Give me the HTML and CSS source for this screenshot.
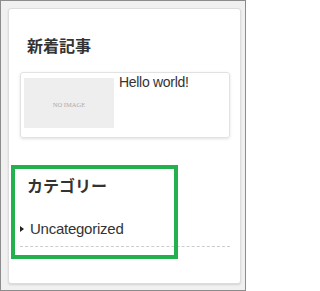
FILE: index.html
```html
<!DOCTYPE html>
<html lang="ja">
<head>
<meta charset="utf-8">
<title>Sidebar</title>
<link rel="stylesheet" href="styles.css">
</head>
<body>
<div class="frame">
  <div class="card">
    <h2 class="widget-title">新着記事</h2>
    <a class="post" href="#">
      <div class="thumb"><span class="noimage">NO IMAGE</span></div>
      <div class="post-title">Hello world!</div>
    </a>
    <h2 class="widget-title cat-title">カテゴリー</h2>
    <ul class="cat-list">
      <li class="cat-item"><span class="arrow"></span><span class="cat-name">Uncategorized</span></li>
    </ul>
  </div>
  <div class="highlight"></div>
</div>
</body>
</html>
```

FILE: styles.css
```css
html, body {
  margin: 0;
  padding: 0;
}
body {
  font-family: "Liberation Sans", Arial, "Noto Sans CJK JP", sans-serif;
  color: #333;
}
.frame {
  position: relative;
  width: 246px;
  height: 291px;
  box-sizing: border-box;
  border: 1px solid #8c8c8c;
  background: #f0f0f0;
  padding: 7px 4px 6px 7px;
  display: flex;
}
.card {
  flex: 1;
  background: #fff;
  border: 1px solid #dcdcdc;
  border-radius: 3px;
  box-shadow: 0 1px 2px rgba(0, 0, 0, 0.12);
  padding: 24px 10px 0 11px;
  display: flex;
  flex-direction: column;
}
.widget-title {
  margin: 0;
  padding-left: 7px;
  font-family: "Noto Sans CJK JP", sans-serif;
  font-size: 16px;
  font-weight: bold;
  line-height: 24px;
  color: #333;
}
.post {
  margin-top: 15px;
  display: flex;
  align-items: flex-start;
  border: 1px solid #e2e2e2;
  border-radius: 3px;
  box-shadow: 0 1px 3px rgba(0, 0, 0, 0.12);
  text-decoration: none;
  color: #333;
}
.thumb {
  width: 90px;
  height: 50px;
  margin: 5px 0 9px 3px;
  background: #eeeeee;
  display: flex;
  align-items: center;
  justify-content: center;
  flex-shrink: 0;
}
.noimage {
  font-family: "Liberation Serif", serif;
  font-size: 6.5px;
  color: #aaa;
  position: relative;
  top: 1px;
}
.post-title {
  margin-left: 5px;
  font-size: 14px;
  letter-spacing: -0.3px;
  line-height: 18px;
}
.cat-title {
  margin-top: 35px;
}
.cat-list {
  list-style: none;
  margin: 22px 0 0 0;
  padding: 0;
}
.cat-item {
  display: flex;
  align-items: center;
  gap: 6px;
  padding-bottom: 7px;
  border-bottom: 1px dashed #cccccc;
  font-size: 15px;
  letter-spacing: -0.25px;
  line-height: 20px;
}
.arrow {
  width: 0;
  height: 0;
  border-left: 4px solid #222;
  border-top: 3.5px solid transparent;
  border-bottom: 3.5px solid transparent;
}
.highlight {
  position: absolute;
  left: 10px;
  top: 164px;
  width: 167px;
  height: 94px;
  box-sizing: border-box;
  border: 4px solid #22b14c;
  pointer-events: none;
}
```
